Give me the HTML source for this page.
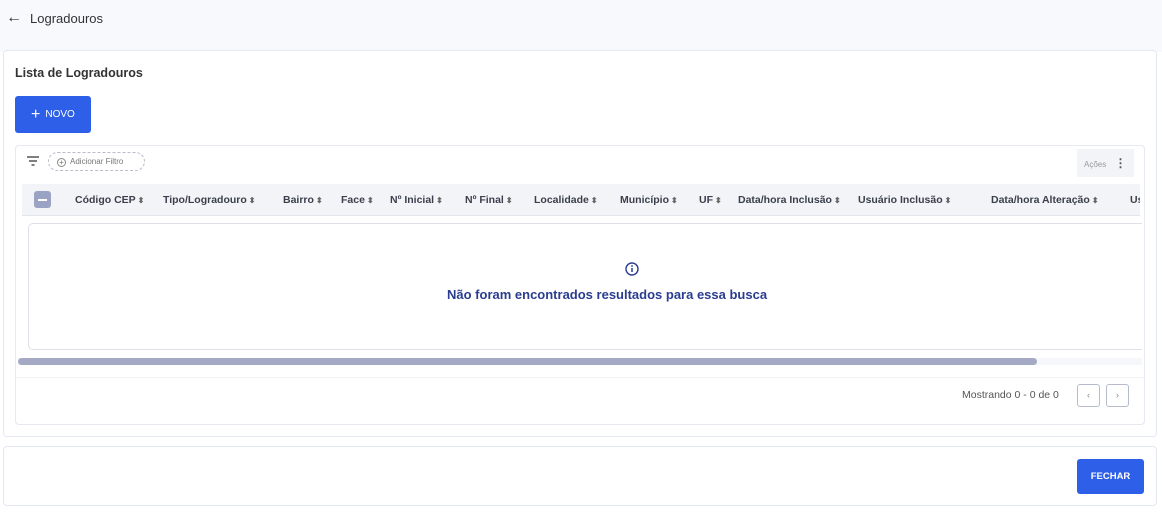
<!DOCTYPE html>
<html><head><meta charset="utf-8"><style>
*{box-sizing:border-box;margin:0;padding:0}
body{width:1162px;height:512px;background:#fff;font-family:"Liberation Sans",sans-serif;position:relative;overflow:hidden;color:#333}
.a{position:absolute}
.th{position:absolute;top:194px;font-size:10.5px;font-weight:bold;color:#3a3f4b;white-space:nowrap}
.th i{font-style:normal;font-size:8px;color:#666;margin-left:2px}
</style></head><body>
<div class="a" style="left:0;top:0;width:1162px;height:52px;background:#f7f9fd"></div>
<div class="a" style="left:6px;top:9px;font-size:16px;color:#333">&#8592;</div>
<div class="a" style="left:30px;top:11px;font-size:13px;color:#333">Logradouros</div>
<div class="a" style="left:3px;top:50px;width:1154px;height:387px;border:1px solid #e4e8f2;border-radius:4px;background:#fff"></div>
<div class="a" style="left:15px;top:66px;font-size:12.5px;font-weight:bold;color:#333">Lista de Logradouros</div>
<div class="a" style="left:15px;top:96px;width:76px;height:37px;background:#2e5fe8;border-radius:3px;color:#fff;font-size:10px;line-height:37px;padding-left:16px"><span style="font-size:16px;vertical-align:-2px;margin-right:5px">+</span>NOVO</div>
<div class="a" style="left:15px;top:145px;width:1130px;height:280px;border:1px solid #e6e9f0;border-radius:4px"></div>
<svg class="a" style="left:27px;top:156px" width="12" height="10"><path d="M0 1h12M2 5h8M4.5 9h3" stroke="#555" stroke-width="1.5"/></svg>
<div class="a" style="left:48px;top:152px;width:97px;height:19px;border:1px dashed #b8bccb;border-radius:10px;font-size:8px;color:#777;line-height:17px;padding-left:8px"><span style="display:inline-block;width:9px;height:9px;border:1px solid #888;border-radius:50%;font-size:8px;line-height:7px;text-align:center;vertical-align:-1px;margin-right:4px">+</span>Adicionar Filtro</div>
<div class="a" style="left:1077px;top:149px;width:57px;height:28px;background:#f3f4f8;font-size:8px;color:#999;line-height:28px;padding-left:7px">Ações <span style="color:#555;font-weight:bold;font-size:12px;margin-left:6px">&#8942;</span></div>
<div class="a" style="left:22px;top:184px;width:1118px;height:32px;background:#f3f4f8;border-bottom:1px solid #e2e5ee"></div>
<div class="a" style="left:34px;top:191px;width:17px;height:17px;background:#9aa3c4;border-radius:3px"><div style="margin:7.5px 4px;height:2px;background:#fff"></div></div>
<div class="th" style="left:75px">Código CEP<i>⬍</i></div>
<div class="th" style="left:163px">Tipo/Logradouro<i>⬍</i></div>
<div class="th" style="left:283px">Bairro<i>⬍</i></div>
<div class="th" style="left:341px">Face<i>⬍</i></div>
<div class="th" style="left:390px">Nº Inicial<i>⬍</i></div>
<div class="th" style="left:465px">Nº Final<i>⬍</i></div>
<div class="th" style="left:534px">Localidade<i>⬍</i></div>
<div class="th" style="left:620px">Município<i>⬍</i></div>
<div class="th" style="left:699px">UF<i>⬍</i></div>
<div class="th" style="left:738px">Data/hora Inclusão<i>⬍</i></div>
<div class="th" style="left:858px">Usuário Inclusão<i>⬍</i></div>
<div class="th" style="left:991px">Data/hora Alteração<i>⬍</i></div>
<div class="th" style="left:1130px;width:10px;overflow:hidden">Us</div>
<div class="a" style="left:28px;top:223px;width:1114px;height:127px;border:1px solid #dde0e8;border-right:none;border-radius:5px 0 0 5px"></div>
<svg class="a" style="left:625px;top:262px" width="14" height="14"><circle cx="7" cy="7" r="6" fill="none" stroke="#2a3d8f" stroke-width="1.4"/><path d="M7 6v4" stroke="#2a3d8f" stroke-width="1.5"/><circle cx="7" cy="4" r=".9" fill="#2a3d8f"/></svg>
<div class="a" style="left:447px;top:287px;font-size:13px;font-weight:bold;color:#2a3d8f">Não foram encontrados resultados para essa busca</div>
<div class="a" style="left:18px;top:358px;width:1124px;height:7px;background:#f5f7fb"></div>
<div class="a" style="left:18px;top:358px;width:1019px;height:7px;background:#a4a9c4;border-radius:4px"></div>
<div class="a" style="left:16px;top:377px;width:1128px;height:1px;background:#f0f2f6"></div>
<div class="a" style="left:962px;top:389px;font-size:10.5px;color:#555">Mostrando 0 - 0 de 0</div>
<div class="a" style="left:1077px;top:384px;width:23px;height:23px;border:1px solid #b6bccd;border-radius:3px;font-size:9px;color:#888;text-align:center;line-height:21px">‹</div>
<div class="a" style="left:1106px;top:384px;width:23px;height:23px;border:1px solid #b6bccd;border-radius:3px;font-size:9px;color:#888;text-align:center;line-height:21px">›</div>
<div class="a" style="left:3px;top:446px;width:1154px;height:60px;border:1px solid #e4e8f2;border-radius:4px"></div>
<div class="a" style="left:1077px;top:459px;width:67px;height:35px;background:#2e5fe8;border-radius:3px;color:#fff;font-size:9.5px;font-weight:bold;text-align:center;line-height:35px">FECHAR</div>
</body></html>
